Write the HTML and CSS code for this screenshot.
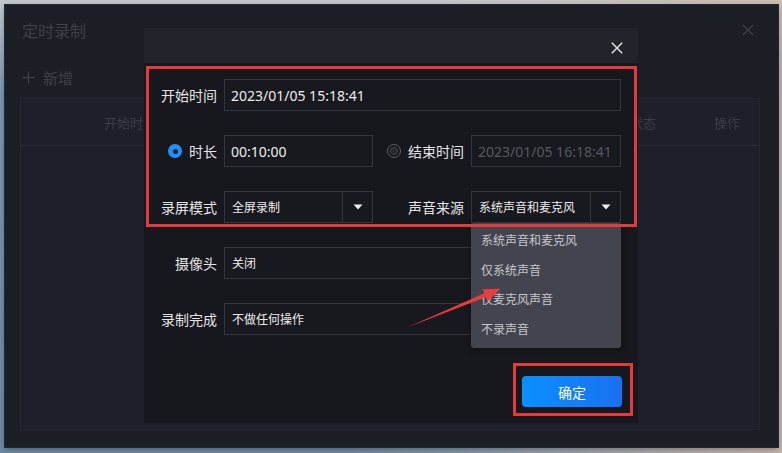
FILE: index.html
```html
<!DOCTYPE html>
<html lang="zh-CN">
<head>
<meta charset="utf-8">
<title>定时录制</title>
<link rel="stylesheet" href="styles.css">
</head>
<body>
<div class="desktop">
  <div class="window">
    <div class="win-head">
      <span class="win-title">定时录制</span>
      <svg class="win-close" width="12" height="12" viewBox="0 0 12 12"><path d="M1 1L11 11M11 1L1 11" stroke="currentColor" stroke-width="1.3"/></svg>
    </div>
    <div class="toolbar">
      <svg class="plus" width="13" height="13" viewBox="0 0 13 13"><path d="M6.5 0.5V12.5M0.5 6.5H12.5" stroke="currentColor" stroke-width="1.3"/></svg>
      <span>新增</span>
    </div>
    <div class="table">
      <div class="thead">
        <span class="th th-start">开始时间</span>
        <span class="th th-fill"></span>
        <span class="th th-status">状态</span>
        <span class="th th-gap"></span>
        <span class="th th-op">操作</span>
      </div>
    </div>
  </div>

  <div class="dialog">
    <div class="dlg-head">
      <svg class="dlg-close" width="12" height="12" viewBox="0 0 12 12"><path d="M0.8 0.8L11.2 11.2M11.2 0.8L0.8 11.2" stroke="currentColor" stroke-width="1.4"/></svg>
    </div>
    <div class="form">
      <span class="lbl">开始时间</span>
      <div class="field span3 num">2023/01/05 15:18:41</div>

      <span class="lbl radio-lbl"><span class="radio on"></span>时长</span>
      <div class="field num">00:10:00</div>
      <span class="lbl radio-lbl"><span class="radio"></span>结束时间</span>
      <div class="field num disabled">2023/01/05 16:18:41</div>

      <span class="lbl">录屏模式</span>
      <div class="select">
        <span class="sel-text">全屏录制</span>
        <span class="sel-btn"><svg width="10" height="6" viewBox="0 0 10 6"><path d="M0.5 0.5H9.5L5 5.5Z" fill="currentColor"/></svg></span>
      </div>
      <span class="lbl">声音来源</span>
      <div class="select open">
        <span class="sel-text">系统声音和麦克风</span>
        <span class="sel-btn"><svg width="10" height="6" viewBox="0 0 10 6"><path d="M0.5 0.5H9.5L5 5.5Z" fill="currentColor"/></svg></span>
        <ul class="menu">
          <li>系统声音和麦克风</li>
          <li>仅系统声音</li>
          <li>仅麦克风声音</li>
          <li>不录声音</li>
        </ul>
      </div>

      <span class="lbl">摄像头</span>
      <div class="select span3">
        <span class="sel-text">关闭</span>
        <span class="sel-btn"><svg width="10" height="6" viewBox="0 0 10 6"><path d="M0.5 0.5H9.5L5 5.5Z" fill="currentColor"/></svg></span>
      </div>

      <span class="lbl">录制完成</span>
      <div class="select span3">
        <span class="sel-text">不做任何操作</span>
        <span class="sel-btn"><svg width="10" height="6" viewBox="0 0 10 6"><path d="M0.5 0.5H9.5L5 5.5Z" fill="currentColor"/></svg></span>
      </div>
    </div>
    <div class="actions">
      <button class="btn-primary" type="button">确定</button>
    </div>

    <div class="mark mark-form"></div>
    <div class="mark mark-btn"></div>
    <svg class="arrow" width="494" height="395" viewBox="0 0 494 395">
      <polygon points="263,299.5 340.4,265.2 338.6,261.2 356.5,260.8 343.8,273 342.0,268.9" fill="#ec3b3d"/>
    </svg>
  </div>
</div>
</body>
</html>
```

FILE: styles.css
```css
* { box-sizing: border-box; }

html, body {
  margin: 0;
  padding: 0;
}

body {
  width: 782px;
  height: 453px;
  overflow: hidden;
  font-family: "Noto Sans", "Noto Sans CJK SC", sans-serif;
}

.desktop {
  position: relative;
  width: 782px;
  height: 453px;
  padding: 5px 4px 6px 5px;
  display: flex;
  background:
    linear-gradient(100deg, rgba(110,140,170,0.0) 50%, rgba(205,185,170,0.9) 100%),
    linear-gradient(180deg, #c3c7cb 0%, #7b97b2 20%, #6c89a6 100%);
}

.window {
  flex: 1;
  display: flex;
  flex-direction: column;
  background: #1c1e25;
  box-shadow: 0 0 0 1px #25282f, 0 2px 6px rgba(0,0,0,0.35);
  color: #3c3f47;
}

.win-head {
  display: flex;
  align-items: center;
  justify-content: space-between;
  padding: 16px 24px 0 17px;
  height: 36px;
}

.win-title {
  font-size: 16px;
  line-height: 20px;
  color: #3d4048;
}

.win-close {
  color: #3d4048;
  margin-top: -2px;
}

.toolbar {
  display: flex;
  align-items: center;
  gap: 8px;
  margin-top: 26px;
  padding-left: 17px;
  height: 20px;
  font-size: 15px;
  color: #3d4048;
}

.plus { color: #3d4048; }

.table {
  flex: 1;
  margin: 11px 18px 17px 15px;
  border: 1px solid #242730;
  background: #1d2028;
}

.thead {
  display: flex;
  align-items: center;
  height: 47px;
  border-bottom: 1px solid #2a2d36;
  font-size: 13px;
  color: #3a3d45;
}

.th-start { width: 218px; text-align: center; }
.th-fill { flex: 1; }
.th-status { width: 80px; text-align: center; }
.th-gap { width: 12px; }
.th-op { width: 64px; text-align: center; }

/* Modal dialog */
.dialog {
  position: absolute;
  left: 144px;
  top: 28px;
  width: 494px;
  height: 395px;
  background: #17181d;
  display: flex;
  flex-direction: column;
}

.dlg-head {
  height: 35px;
  background: #22242b;
  display: flex;
  align-items: center;
  justify-content: flex-end;
  padding: 4px 15px 0 0;
}

.dlg-close { color: #e6e6e6; }

.form {
  display: grid;
  grid-template-columns: 73px 149px 84px 150px;
  grid-auto-rows: 32px;
  column-gap: 7px;
  row-gap: 24px;
  padding-top: 16px;
  align-items: center;
}

.lbl {
  display: flex;
  align-items: center;
  justify-content: flex-end;
  font-size: 14px;
  color: #e4e4e6;
  white-space: nowrap;
}

.radio-lbl {
  gap: 7px;
}

.radio-lbl:first-of-type { padding-right: 2px; }

.radio {
  width: 14px;
  height: 14px;
  border-radius: 50%;
  border: 1px solid #5c5e65;
  display: flex;
  align-items: center;
  justify-content: center;
}

.radio::after {
  content: "";
  width: 6px;
  height: 6px;
  border-radius: 50%;
  border: 1px solid #45474e;
  background: #26282e;
}

.radio.on {
  border: none;
  background: #2190f4;
}

.radio.on::after {
  width: 5px;
  height: 5px;
  border: none;
  background: #10243c;
}

.field, .select {
  height: 32px;
  border: 1px solid #34363d;
  background: #18191e;
  color: #ececec;
  font-size: 12px;
  display: flex;
  align-items: center;
  padding-left: 7px;
}

.span3 { grid-column: 2 / 5; }

.num { font-size: 14px; padding-left: 6px; }

.disabled { color: #55585f; }

.select {
  position: relative;
  padding-left: 0;
}

.sel-text {
  flex: 1;
  padding-left: 7px;
}

.sel-btn {
  width: 30px;
  height: 100%;
  border-left: 1px solid #34363d;
  display: flex;
  align-items: center;
  justify-content: center;
  color: #ededed;
}

.menu {
  position: absolute;
  z-index: 2;
  left: -1px;
  right: -1px;
  top: calc(100% + 1px);
  margin: 0;
  padding: 3px 0 4px;
  list-style: none;
  background: #43454e;
  border-radius: 3px;
  box-shadow: 0 2px 6px rgba(0,0,0,0.3);
}

.menu li {
  height: 29.5px;
  line-height: 29.5px;
  padding-left: 10px;
  font-size: 12px;
  color: #c6c7cc;
}

.actions {
  display: flex;
  justify-content: flex-end;
  padding-right: 16px;
  margin-top: 41px;
}

.btn-primary {
  width: 100px;
  height: 31px;
  border: none;
  border-radius: 4px;
  background: linear-gradient(90deg, #0a90fe 0%, #1a70f2 100%);
  color: #ffffff;
  font-family: "Noto Sans", "Noto Sans CJK SC", sans-serif;
  font-size: 14px;
  padding: 0;
}

/* Annotation overlays */
.mark {
  position: absolute;
  z-index: 3;
  border: 3px solid #e5393b;
  pointer-events: none;
}

.mark-form {
  left: 2px;
  top: 38px;
  width: 491px;
  height: 161px;
}

.mark-btn {
  left: 369px;
  top: 335px;
  width: 120px;
  height: 53px;
}

.arrow {
  position: absolute;
  z-index: 4;
  left: 0;
  top: 0;
  pointer-events: none;
}
```
